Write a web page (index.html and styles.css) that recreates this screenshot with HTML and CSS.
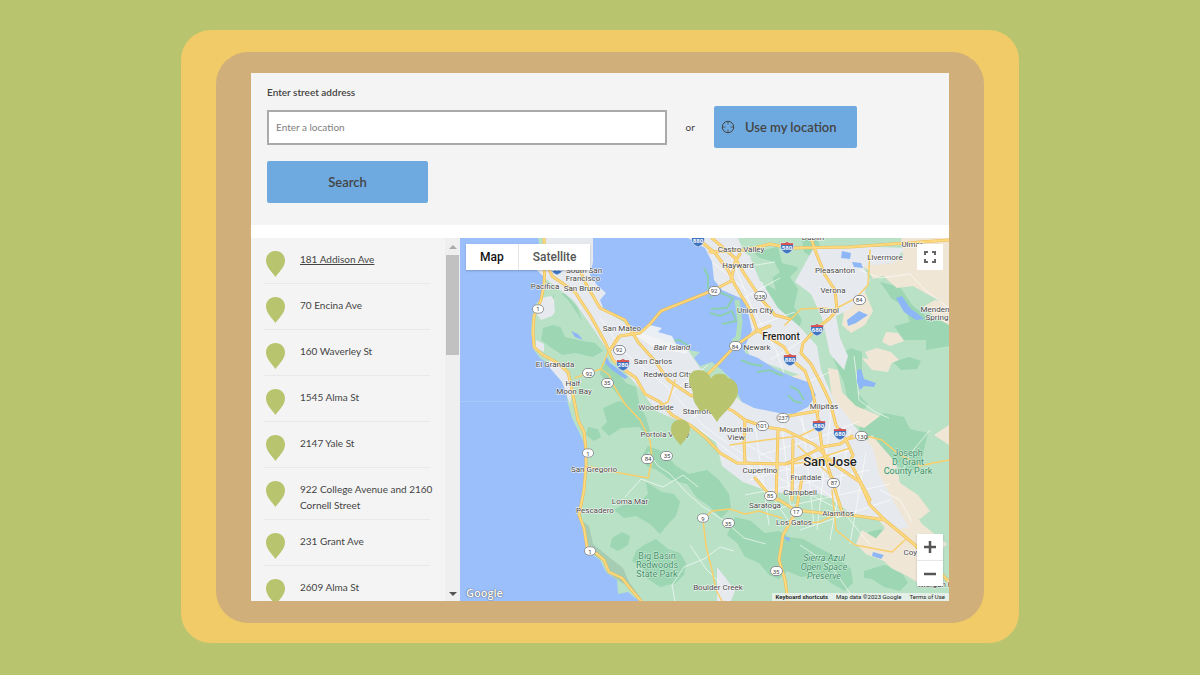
FILE: index.html
```html
<!DOCTYPE html>
<html lang="en">
<head>
<meta charset="utf-8">
<meta name="viewport" content="width=device-width, initial-scale=1">
<title>Location finder</title>
<link rel="stylesheet" href="styles.css">
</head>
<body>
<svg class="defs" aria-hidden="true">
  <symbol id="pin" viewBox="0 0 19 26"><path d="M9.500 0C4 0 0 4 0 9.500c0 6.500 6 11.500 9.500 16.500C13 21 19 16 19 9.500 19 4 15 0 9.500 0z"/></symbol>
  <symbol id="state" viewBox="0 0 13 10"><rect x=".5" y=".5" width="12" height="9" rx="4.500" fill="#fff" stroke="#8b8f94"/></symbol>
  <symbol id="interstate" viewBox="0 0 14 12"><path d="M1 1q3 1 6-1 3 2 6 1 1 4 0 6-2 4-6 5-4-1-6-5Q0 5 1 1z" fill="#3f74c0" stroke="#fff" stroke-width=".6"/><path d="M1 1q3 1 6-1 3 2 6 1l.2 2H.8z" fill="#d9534f"/></symbol>
  <g id="highways">
    <path d="M544 238L545 262 544 285 541 300 534 316 533 332 534 347 543 355 556 362 568 372 572 390 575 405 578 420 584 432 586 450 586 466 584 490 579 515 584 528 587 547 597 554 604 560 609 572 622 578 630 588 641 601"/>
    <path d="M546 262L552 276 575 292 590 315 605 342 613 360 622 368 636 378 645 394 660 402 672 415 690 425 705 437 720 453 737 463 785 464 805 456 822 447 840 444 852 436"/>
    <path d="M576 262L586 284 600 308 625 320 638 342 655 361 668 380 690 395 720 405 733 411 745 420 765 427 785 430 815 445 835 465 860 482 870 505 885 520 915 545 949 582"/>
    <path d="M610 350L620 336 640 333 650 324 661 311 714 290 731 281 735 262 740 254"/>
    <path d="M697 238L715 253 728 270 735 285 750 310 757 330 770 338 784 347 792 360 805 371 812 390 817 412 822 447 833 483 842 512"/>
    <path d="M712 238L735 258 745 275 762 300 775 315 790 319"/>
    <path d="M710 252L745 250 770 244 790 248 850 247 949 240"/>
    <path d="M811 238L815 250 825 275 835 290 837 310 830 318 815 330 803 343 801 353 811 364 822 385 830 402 836 425 846 440 853 455 850 462 870 500"/>
    <path d="M708 374L720 362 735 346 755 332 770 326"/>
    <path d="M755 478L768 493 795 510 830 514 858 516 885 520M802 478L796 512 783 535 779 560 785 580 788 601"/>
    <path d="M782 417L800 414 818 411M745 420L744 440 745 462M778 430L776 500M793 440L792 500"/>
  </g>
</svg>
<div class="frame">
  <div class="bezel">
    <main class="panel">
      <form class="search">
        <label class="search-label" for="address">Enter street address</label>
        <div class="search-row">
          <input class="search-input" id="address" type="text" placeholder="Enter a location">
          <span class="search-or">or</span>
          <button class="btn btn-locate" type="button">
            <svg class="locate-icon" viewBox="0 0 14 14" fill="none" stroke="currentColor" aria-hidden="true"><circle cx="7" cy="7" r="5.700"/><path d="M7 1v3.500M7 9.500V13M1 7h3.500M9.500 7H13" stroke-width=".8"/></svg>
            Use my location
          </button>
        </div>
        <button class="btn btn-search" type="submit">Search</button>
      </form>
      <section class="results">
        <div class="sidebar">
          <ul class="list">
            <li class="item"><svg class="pin"><use href="#pin"/></svg><a class="place current" href="#">181 Addison Ave</a></li>
            <li class="item"><svg class="pin"><use href="#pin"/></svg><a class="place" href="#">70 Encina Ave</a></li>
            <li class="item"><svg class="pin"><use href="#pin"/></svg><a class="place" href="#">160 Waverley St</a></li>
            <li class="item"><svg class="pin"><use href="#pin"/></svg><a class="place" href="#">1545 Alma St</a></li>
            <li class="item"><svg class="pin"><use href="#pin"/></svg><a class="place" href="#">2147 Yale St</a></li>
            <li class="item"><svg class="pin"><use href="#pin"/></svg><a class="place" href="#">922 College Avenue and 2160 Cornell Street</a></li>
            <li class="item"><svg class="pin"><use href="#pin"/></svg><a class="place" href="#">231 Grant Ave</a></li>
            <li class="item"><svg class="pin"><use href="#pin"/></svg><a class="place" href="#">2609 Alma St</a></li>
          </ul>
          <div class="scrollbar" aria-hidden="true">
            <span class="arrow arrow-up"></span>
            <span class="thumb"></span>
            <span class="arrow arrow-down"></span>
          </div>
        </div>
        <div class="map">
          <svg class="map-canvas" viewBox="460 238 489 363" preserveAspectRatio="xMidYMid slice" role="img" aria-label="Map of the San Francisco Bay Area">
            <rect x="460" y="238" width="489" height="363" fill="#9bbffa"/>
            <path d="M460 401.500H567" stroke="#a9c8fb" stroke-width="1"/>
            <!-- land -->
            <path fill="#b9e1c6" d="M538 238l3 17 4 7-2 13 2 15-4 8-6 7-3 13-1 15 3 17 6 8 8 6 12 12 6 16 2 12 4 14 6 12 6 13 2 17-2 18-3 22-2 15 4 15 4 16 3 7 10 7 6 12 11 8 1 14 10-2 7 6 5 3H949V238z"/>
            <path fill="#a6cdb4" d="M581 520l8 6 4 18 12 10 18 14 6 14 14 19-14-14-16-10-10-16-15-10z"/>
            <!-- forests -->
            <g fill="#9dd6b3">
              <path d="M553 295l12-2 12 14 5 13-4 8-14-7-11-12zM543 328l10-3 17 5 9 10 16 3 8 8-10 6-18-4-13 2-13-9-8-6zM602 362l12 5 12 16 10 4 4 20 6 10 4 14-4 3-14-14-10-20-10-12-12-14z"/>
              <path d="M603 408l16-7 16 6 8 10-4 10-18 1-12 8-8-8 6-6zM588 427l10 2 3 8-7 4-8-6zM648 446l16 6 12 14 13 8 18-4 12 10 10 14 2 14-10 10-12-12-12-8-10-14-16-4-14-10-10-4-6-8z"/>
              <path d="M646 482l16 10 12 2 6 8-4 14-8 8-8 10-10-10-14-8-12 2-10-8 10-6 16-2 8-8zM612 538l10-6 8 4-2 9-10 6-8-4zM644 545l12-6 12 10 12 4 6 10-2 12-8 8-16 4-12-8-6-12-10-6 4-10z"/>
              <path d="M735 517l16 4 14 12 14-2 10 6 14 2 18 10 12 6 18 14 2 14-8 8-14-8-10-8-20 2-14-6-8 8-10-4-10-12-14-6-8-14-10-8zM864 571l20-6 16 4 8 14-8 8-16-4-12-8-8-1z"/>
              <path d="M755 252l22-5 16 10 5 12-8 8 8 12-4 18 8 13-4 10-14-8-8-16-12-14 6-12 10-8-6-10-14-4-5-4zM802 240h16l4 12-10 5-8-5z"/>
              <path d="M823 297l8-6 8 12-6 11-7-3zM833 358l18-10 11 4v21l-4 20 10 12-6 6-14-10-4-18zM880 282l20 5 12 18 19 15 14-1 4 3v24l-23 4v-10h-22l-10-14 16-4-6-16-12-7zM893 362l16-5 12 4-4 8-16 1zM872 264l10-2 14 12-4 8-8-4-8-8z"/>
              <path d="M860 427l12-6 12-8 20 4 6 12 18 4-4 16-2 14-12 10-14-8-10 2-14-16-14-16zM868 487l10-3 8 8-10 6zM868 532l14-3 4 8-8 6-10-3z"/>
            </g>
            <!-- dry hills -->
            <g fill="#f0e6d6">
              <path d="M868 256l20 8 15-7-2-19h48v67l-22-11-14-8-16 2-14-12-10 3-4-8-8-6-6 10 8 12 10 24-8 14-14 8-9-8 2-14 14-12 4-14-8-20zM935 300l14 3v22l-14-8-12-10zM886 332l12 1 6 8-14 5-8-4zM865 352l12-4 14 4 8 8-12 5-18-5zM862 358l30 4-4 10-16-2zM828 368l10 2 4 22 14 14 24 10-16 12-16-6-16-24z"/>
              <path d="M872 435l10 12 14 16 4 20 18 12 12 16-10 8-24-5-14-10-14-22-18-24zM890 494l18 8 14 22 25 20-18 16-12 22-10-6-16-8-22-22 16-18-8-10zM862 530l20 12 16 8-12 12-20-8-10-10zM780 385l10-8 10-3 4 12-14 6zM934 435l15-10v20z"/>
            </g>
            <!-- built-up areas -->
            <g fill="#e6e9ee">
              <path d="M546 238h47v28l13 27-2 17 36 22 48 18 12 18 42 34 43 12 23-19-8-20-50-17-8-28-38-60-24-32h58l6 14 21 15-2 17 15 24 21 18 18 20 4 24 12 28 20 26 20 24 6 26 16 30 14 23-10 2-24-10-24-5-20-16-20-7-30 2-16-3-22-8-21-16-6-24-22-16-22-8-16-7-16-22-28-32-16-24-22-32-28-22-14-14z"/>
              <path d="M813 249l40-3 52 2-12 15-30 3 7 14-8 17-14 13-12 6 4 22 8 18-4 14-14-16-8-36-11-24-16-12zM541 298l10-2 9 10-8 10-11 4-6-8zM549 357l10 6 9 13 4 16-2 12-8-22-12-14zM536 340l8 4v8l-8-4zM717 567l8 10 10 14-4 10h-14z"/>
              <path fill="#b9e1c6" d="M553 285l15 15 15 22 4 20-22-5-10-24zM778 247l20 4v16l-16-4zM750 257l10 3 12 16 4 14-16-9z"/>
            </g>
            <g stroke="#fff" stroke-width=".8" fill="none" opacity=".8">
              <path d="M600 318l26 36 40 32 38 40 44 32 38 24 54 28M728 250l24 58 24 42 20 58 28 70M700 430l54 40 34 50M760 455l60-18 40-16M750 480l100-30M745 495l125-25M770 510l120-26M800 530l90-30M740 440l90 55 40 50M755 425l14 100M782 425l10 95M802 415l12 110M832 405l-15 125M850 430l-20 110M866 452l-16 92M725 270l50-8M712 262l60 50M740 300l40-22M745 330l50-18M770 360l40-24M790 390l40-18M668 395l40-30M690 420l26-22"/>
              <path d="M648 452l10 14 12 8 16 18 16 14 24 16 18 16 22 6M625 497l16-18 22 8 20-12 15 12M675 601l-3-16 12-18 20-8 16-12 14 4M690 545l16 24 14 14M860 270l20 8 30-4 15 16 24 18M854 356l3 24 2 20 16 12 14 6M880 490l20 10 12 22M930 430l-20 24-8 18M800 545l30 20 20 28"/>
            </g>
            <!-- water -->
            <path fill="#9bbffa" d="M593 238v24l-3 13 7 10 9 8-6 7 4 10 14 5 8 7 6 8 8 2 15 6 10 2 15 5 8 5 12 2-6 6 6 8 12-4 10 8 13 13 3 11 4 8 12 6 25 5 15 1 14-7 8-12-8-13-15-5-18-8-17-11-13-5v-7l7-16-7-30-23-10-8-10-2-18-7-14-9-5-8-5z"/>
            <g fill="none" stroke="#8ccfb0" stroke-width="2">
              <path d="M709 298l10-6 14 6-6 10-16 1M710 313l10 3 12-5 4 10-14 3M704 268l4 8v14M741 360l10 4 12 2M757 372l12-2 14 6M790 386l8 4 6 10M689 346l-10-6-14 2M788 395l6 6 8 2"/>
              <path d="M737 300l3 22-2 16-5 4" stroke-width="5" stroke="#b0dfbc"/>
            </g>
            <path fill="#f3f4f5" opacity=".9" d="M650 325l12 3-4 4 14 4 4 8 14 4-4 6-14-3-16-2-12-8-10-6z"/>
            <g fill="#8db6f7">
              <path d="M847 320l12-9 9 4-12 8-8 3zM896 298l6-2 8 12 8 6 6 5-8 1-12-8zM857 370l4-1 3 10 12 4-2 4-10-1-4 4-3-8zM842 251l9 2-1 6-9-1zM852 262l9 1 2 5-9-1zM606 356l4 7 8 6 10 8-3 2-13-9-7-7zM873 552l11 3-3 4-9-3zM782 536l8 2-1 4zM571 331l7 3 5 6-8-3z"/>
            </g>
            <!-- roads -->
            <g fill="none" stroke-linecap="round" stroke-linejoin="round">
              <path stroke="#f8cf6c" stroke-width="1.500" d="M575 378L589 373 601 369 609 375 615 388 625 404M601 369L608 352 618 336M625 404L640 420 650 440 652 460 648 478 620 473 586 466M675 380L668 402 655 408M704 519L712 511 730 509 745 514 759 511 782 518M703 520L706 546 712 570 716 590 722 601M837 308L856 298 868 285 870 250M785 325L801 309 823 308 838 310M846 440L866 436 882 440 896 452 920 466 933 463 949 460M832 490L836 530 855 545 892 552 905 540M836 514L820 522 794 524M730 445L765 440 800 436 825 424M785 464L840 460M808 462L850 448M798 446L836 480"/>
              <use href="#highways" stroke="#edbd57" stroke-width="3"/>
              <use href="#highways" stroke="#fdda80" stroke-width="1.800"/>
            </g>
            <!-- route shields -->
            <g class="shield">
              <use href="#interstate" x="691" y="235" width="14" height="12"/><text x="698" y="243">880</text>
              <use href="#interstate" x="780" y="242" width="14" height="12"/><text x="787" y="250">580</text>
              <use href="#interstate" x="550" y="263" width="14" height="12"/><text x="557" y="271">280</text>
              <use href="#interstate" x="810" y="324" width="14" height="12"/><text x="817" y="332">680</text>
              <use href="#interstate" x="783" y="354" width="14" height="12"/><text x="790" y="362">880</text>
              <use href="#interstate" x="616" y="359" width="14" height="12"/><text x="623" y="367">280</text>
              <use href="#interstate" x="812" y="420" width="14" height="12"/><text x="819" y="428">880</text>
              <use href="#interstate" x="833" y="428" width="14" height="12"/><text x="840" y="436">680</text>
            </g>
            <g class="route">
              <use href="#state" x="532" y="304" width="12" height="10"/><text x="538" y="311">1</text>
              <use href="#state" x="708" y="286" width="13" height="10"/><text x="714" y="293">92</text>
              <use href="#state" x="753" y="291" width="15" height="10"/><text x="760" y="299">238</text>
              <use href="#state" x="853" y="295" width="13" height="10"/><text x="859" y="302">84</text>
              <use href="#state" x="613" y="345" width="13" height="10"/><text x="619" y="352">92</text>
              <use href="#state" x="729" y="341" width="13" height="10"/><text x="735" y="349">84</text>
              <use href="#state" x="582" y="368" width="13" height="10"/><text x="589" y="376">92</text>
              <use href="#state" x="601" y="378" width="13" height="10"/><text x="607" y="385">35</text>
              <use href="#state" x="582" y="448" width="12" height="10"/><text x="588" y="456">1</text>
              <use href="#state" x="641" y="454" width="13" height="10"/><text x="648" y="461">84</text>
              <use href="#state" x="660" y="451" width="13" height="10"/><text x="667" y="458">35</text>
              <use href="#state" x="776" y="413" width="14" height="10"/><text x="783" y="420">237</text>
              <use href="#state" x="755" y="421" width="15" height="10"/><text x="762" y="428">101</text>
              <use href="#state" x="854" y="431" width="15" height="10"/><text x="862" y="439">130</text>
              <use href="#state" x="827" y="478" width="13" height="10"/><text x="834" y="485">87</text>
              <use href="#state" x="764" y="491" width="13" height="10"/><text x="770" y="498">85</text>
              <use href="#state" x="790" y="507" width="13" height="10"/><text x="796" y="514">17</text>
              <use href="#state" x="697" y="513" width="12" height="10"/><text x="703" y="521">9</text>
              <use href="#state" x="722" y="518" width="13" height="10"/><text x="728" y="526">35</text>
              <use href="#state" x="584" y="546" width="12" height="10"/><text x="590" y="554">1</text>
              <use href="#state" x="770" y="566" width="13" height="10"/><text x="776" y="574">35</text>
            </g>
            <!-- place names -->
            <g class="town">
              <text x="741" y="252">Castro Valley</text><text x="738" y="268">Hayward</text>
              <text x="813" y="240">Dublin</text><text x="912" y="247">Ulmar</text><text x="885" y="260">Livermore</text>
              <text x="835" y="273">Pleasanton</text><text x="833" y="293">Verona</text><text x="829" y="313">Sunol</text>
              <text x="755" y="313">Union City</text><text x="757" y="350">Newark</text>
              <text x="935" y="312">Menden</text><text x="937" y="320">Spring</text>
              <text x="584" y="273">South San</text><text x="583" y="281">Francisco</text>
              <text x="545" y="289">Pacifica</text><text x="582" y="291">San Bruno</text>
              <text x="622" y="331">San Mateo</text><text class="island" x="672" y="350">Bair Island</text>
              <text x="653" y="364">San Carlos</text><text x="668" y="377">Redwood City</text><text x="709" y="388">East Palo Alto</text>
              <text x="555" y="367">El Granada</text><text x="573" y="386">Half</text><text x="574" y="394">Moon Bay</text>
              <text x="656" y="410">Woodside</text><text x="698" y="414">Stanford</text><text x="665" y="437">Portola Valley</text>
              <text x="736" y="432">Mountain</text><text x="736" y="440">View</text><text x="824" y="409">Milpitas</text>
              <text x="760" y="473">Cupertino</text><text x="806" y="480">Fruitdale</text><text x="800" y="495">Campbell</text>
              <text x="765" y="508">Saratoga</text><text x="838" y="516">Alamitos</text><text x="794" y="525">Los Gatos</text>
              <text x="594" y="472">San Gregorio</text><text x="630" y="504">Loma Mar</text><text x="595" y="513">Pescadero</text>
              <text x="718" y="590">Boulder Creek</text><text x="916" y="555">Coyote</text><text x="936" y="587">Morgan H</text>
              <text class="city" x="781" y="340">Fremont</text><text class="metro" x="830" y="466">San Jose</text>
            </g>
            <g class="park">
              <text x="908" y="456">Joseph</text><text x="908" y="465">D. Grant</text><text x="908" y="474">County Park</text>
              <text x="657" y="559">Big Basin</text><text x="657" y="568">Redwoods</text><text x="657" y="577">State Park</text>
              <text class="slant" x="824" y="561">Sierra Azul</text><text class="slant" x="824" y="570">Open Space</text><text class="slant" x="824" y="579">Preserve</text>
            </g>
            <!-- markers -->
            <g fill="#b8c46e">
              <path d="M689 380C689 373 693 370 699 370 705 370 709 374 711 378 714 374 718 373 722 374 725 374 727 376 728 378 734 379 738 384 738 390 738 403 723 412 717 422L710 412 706 409 701 412C698 407 693 403 693 396 694 390 689 387 689 380z"/>
              <use href="#pin" x="671" y="419" width="19" height="27"/>
            </g>
          </svg>
          <div class="map-types">
            <button class="map-type selected" type="button">Map</button>
            <button class="map-type" type="button">Satellite</button>
          </div>
          <button class="map-btn fullscreen" type="button" aria-label="Toggle fullscreen">
            <svg viewBox="0 0 12 12" fill="none" stroke="#666" stroke-width="2" aria-hidden="true"><path d="M1 4V1h3M8 1h3v3M11 8v3H8M4 11H1V8"/></svg>
          </button>
          <div class="zoom">
            <button class="map-btn" type="button" aria-label="Zoom in"><svg viewBox="0 0 12 12" stroke="#555" stroke-width="2.500" aria-hidden="true"><path d="M0 6h12M6 0v12"/></svg></button>
            <button class="map-btn" type="button" aria-label="Zoom out"><svg viewBox="0 0 12 12" stroke="#555" stroke-width="2.500" aria-hidden="true"><path d="M0 6h12"/></svg></button>
          </div>
          <span class="brand">Google</span>
          <div class="credits">
            <button class="credit shortcuts" type="button">Keyboard shortcuts</button>
            <span class="credit">Map data ©2023 Google</span>
            <a class="credit" href="#">Terms of Use</a>
          </div>
        </div>
      </section>
    </main>
  </div>
</div>
</body>
</html>
```

FILE: styles.css
```css
* { box-sizing: border-box; }

body {
  margin: 0;
  height: 100vh;
  min-height: 560px;
  display: flex;
  padding: 30px 181px 32px;
  background: #b8c46e;
  color: #444;
  font-family: Lato, "Liberation Sans", sans-serif;
}

button, input { font-family: inherit; color: inherit; }
button { border: 0; padding: 0; }
.defs { position: absolute; width: 0; height: 0; }

.frame, .bezel {
  flex: 1;
  min-width: 0;
  display: flex;
}
.frame { padding: 22px 35px 20px; border-radius: 30px; background: #f0cb67; }
.bezel { padding: 21px 35px 22px; border-radius: 32px; background: #d0af7b; }

.panel {
  flex: 1;
  min-width: 0;
  display: flex;
  flex-direction: column;
  gap: 13px;
  background: #fff;
}

/* Search form */
.search { padding: 12px 16px 22px; background: #f4f4f4; }
.search-label {
  display: block;
  margin-bottom: 7px;
  font-size: 10px;
  line-height: 14px;
  font-weight: 600;
}
.search-row {
  display: flex;
  align-items: center;
  gap: 19px;
  margin-bottom: 13px;
}
.search-input {
  width: 60%;
  height: 35px;
  padding: 0 7px;
  border: 2px solid #aaa;
  background: #fff;
  font-size: 10px;
}
.search-input::placeholder { color: #808080; }
.search-or { font-size: 10px; }
.btn {
  height: 42px;
  border-radius: 2px;
  background: #6eaae0;
  font-size: 13px;
  font-weight: 600;
}
.btn-locate {
  display: flex;
  align-items: center;
  gap: 10px;
  padding: 0 20px 0 7px;
}
.locate-icon { width: 14px; height: 14px; }
.btn-search { width: 161px; }

/* Results */
.results {
  flex: 1;
  min-height: 0;
  display: grid;
  grid-template-columns: 209px 1fr;
}
.sidebar {
  min-height: 0;
  display: flex;
  overflow: hidden;
  background: #f4f4f4;
}
.list {
  flex: 1;
  margin: 0;
  padding: 0 15px 0 13px;
  list-style: none;
}
.item {
  display: flex;
  gap: 15px;
  min-height: 46px;
  padding: 13px 0 6px 2px;
  border-bottom: 1px solid #e9e9e9;
}
.pin { flex: none; width: 19px; height: 26px; fill: #b8c46e; }
.place {
  color: #444;
  font-size: 10px;
  line-height: 16px;
  margin-right: -8px;
  text-decoration: none;
}
.place.current { text-decoration: underline; }

.scrollbar {
  width: 15px;
  display: flex;
  flex-direction: column;
  align-items: center;
  padding: 7px 0 5px;
  background: #efefef;
}
.arrow { border: 4px solid transparent; border-top-width: 0; border-bottom: 4px solid #aaa; }
.arrow-down { margin-top: auto; border-top: 4px solid #555; border-bottom-width: 0; }
.thumb { width: 13px; height: 100px; margin-top: 6px; background: #c1c1c1; }

/* Map */
.map {
  position: relative;
  min-width: 0;
  min-height: 0;
  overflow: hidden;
  font-family: Roboto, "Liberation Sans", sans-serif;
}
.map-canvas { position: absolute; inset: 0; width: 100%; height: 100%; }
.map-canvas text { text-anchor: middle; }
.town text {
  font-size: 8px;
  fill: #444;
  stroke: #fff;
  stroke-width: 1px;
  paint-order: stroke;
}
.town .city { font-size: 10px; font-weight: 500; fill: #222; }
.town .metro { font-size: 13px; font-weight: 500; fill: #222; }
.town .island, .park .slant { font-style: italic; }
.park text {
  font-size: 9px;
  fill: #3f9068;
  stroke: #d5eedd;
  stroke-width: 1px;
  paint-order: stroke;
}
.route text { font-size: 6px; fill: #444; }
.shield text { font-size: 6px; font-weight: 700; fill: #fff; }

.map-types {
  position: absolute;
  left: 6px;
  top: 6px;
  display: flex;
  gap: 1px;
  background: #e6e6e6;
  box-shadow: 0 1px 2px #0003;
}
.map-type {
  height: 26px;
  padding: 0 14px;
  background: #fff;
  color: #555;
  font-size: 12px;
  font-weight: 500;
}
.map-type.selected { color: #111; }
.map-btn {
  display: grid;
  place-items: center;
  width: 26px;
  height: 26px;
  background: #fff;
}
.map-btn svg { width: 12px; height: 12px; }
.fullscreen { position: absolute; right: 6px; top: 6px; }
.zoom {
  position: absolute;
  right: 6px;
  bottom: 15px;
  background: #fff;
  box-shadow: 0 1px 2px #0003;
}
.zoom .map-btn + .map-btn { border-top: 1px solid #e6e6e6; }
.brand {
  position: absolute;
  left: 6px;
  bottom: 1px;
  color: #fff;
  font-family: "Open Sans", sans-serif;
  font-size: 11px;
  font-weight: 600;
  line-height: 14px;
  text-shadow: 0 0 1px #555, 0 0 1px #555;
}
.credits {
  position: absolute;
  right: 0;
  bottom: 0;
  display: flex;
  gap: 8px;
  padding: 0 4px;
  background: #f5f5f5b3;
}
.credit {
  background: none;
  color: #222;
  font-size: 6px;
  line-height: 8px;
  text-decoration: none;
}
.shortcuts { font-weight: 600; }
```
